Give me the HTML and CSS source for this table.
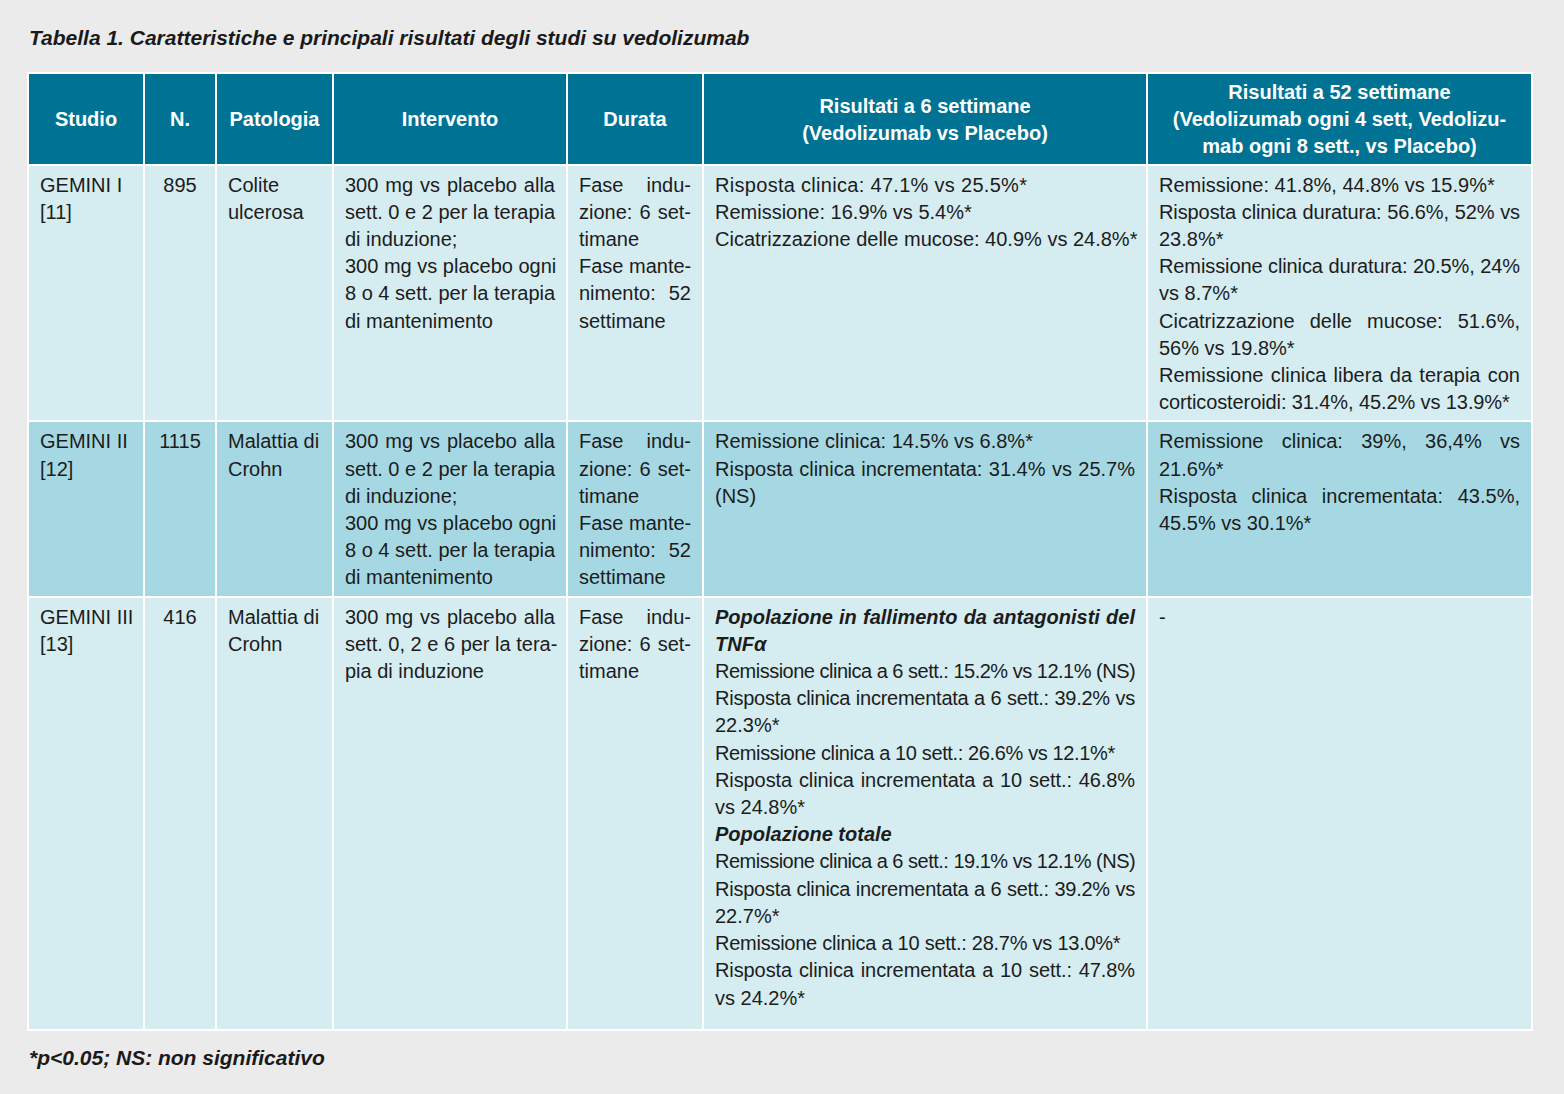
FILE: index.html
```html
<!DOCTYPE html>
<html lang="it">
<head>
<meta charset="utf-8">
<title>Tabella 1</title>
<link rel="stylesheet" href="styles.css">
</head>
<body>
<div class="page">
  <h1 class="caption">Tabella 1. Caratteristiche e principali risultati degli studi su vedolizumab</h1>
  <table class="data">
    <colgroup>
      <col class="c-studio"><col class="c-n"><col class="c-pat"><col class="c-int"><col class="c-dur"><col class="c-r6"><col class="c-r52">
    </colgroup>
    <thead>
      <tr>
        <th>Studio</th>
        <th>N.</th>
        <th>Patologia</th>
        <th>Intervento</th>
        <th>Durata</th>
        <th>Risultati a 6 settimane<br>(Vedolizumab vs Placebo)</th>
        <th>Risultati a 52 settimane<br>(Vedolizumab ogni 4 sett, Vedolizu-<br>mab ogni 8 sett., vs Placebo)</th>
      </tr>
    </thead>
    <tbody>
      <tr class="light">
        <td class="study">GEMINI I<br>[11]</td>
        <td class="num">895</td>
        <td>Colite<br>ulcerosa</td>
        <td>
          <p class="just"><span>300 mg vs placebo alla</span><span>sett. 0 e 2 per la terapia</span><span>di induzione;</span></p>
          <p class="just"><span>300 mg vs placebo ogni</span><span>8 o 4 sett. per la terapia</span><span>di mantenimento</span></p>
        </td>
        <td>
          <p class="just"><span>Fase indu-</span><span>zione: 6 set-</span><span>timane</span></p>
          <p class="just"><span>Fase mante-</span><span>nimento: 52</span><span>settimane</span></p>
        </td>
        <td>
          <p class="just"><span class="wide">Risposta clinica: 47.1% vs 25.5%*</span></p>
          <p class="just"><span>Remissione: 16.9% vs 5.4%*</span></p>
          <p class="just"><span>Cicatrizzazione delle mucose: 40.9% vs 24.8%*</span></p>
        </td>
        <td>
          <p class="just"><span>Remissione: 41.8%, 44.8% vs 15.9%*</span></p>
          <p class="just"><span class="tight-1">Risposta clinica duratura: 56.6%, 52% vs</span><span>23.8%*</span></p>
          <p class="just"><span class="tight-1">Remissione clinica duratura: 20.5%, 24%</span><span>vs 8.7%*</span></p>
          <p class="just"><span>Cicatrizzazione delle mucose: 51.6%,</span><span>56% vs 19.8%*</span></p>
          <p class="just"><span>Remissione clinica libera da terapia con</span><span class="tight-1">corticosteroidi: 31.4%, 45.2% vs 13.9%*</span></p>
        </td>
      </tr>
      <tr class="dark">
        <td class="study">GEMINI II<br>[12]</td>
        <td class="num">1115</td>
        <td>Malattia di<br>Crohn</td>
        <td>
          <p class="just"><span>300 mg vs placebo alla</span><span>sett. 0 e 2 per la terapia</span><span>di induzione;</span></p>
          <p class="just"><span>300 mg vs placebo ogni</span><span>8 o 4 sett. per la terapia</span><span>di mantenimento</span></p>
        </td>
        <td>
          <p class="just"><span>Fase indu-</span><span>zione: 6 set-</span><span>timane</span></p>
          <p class="just"><span>Fase mante-</span><span>nimento: 52</span><span>settimane</span></p>
        </td>
        <td>
          <p class="just"><span>Remissione clinica: 14.5% vs 6.8%*</span></p>
          <p class="just"><span>Risposta clinica incrementata: 31.4% vs 25.7%</span><span>(NS)</span></p>
        </td>
        <td>
          <p class="just"><span>Remissione clinica: 39%, 36,4% vs</span><span>21.6%*</span></p>
          <p class="just"><span>Risposta clinica incrementata: 43.5%,</span><span>45.5% vs 30.1%*</span></p>
        </td>
      </tr>
      <tr class="light last">
        <td class="study">GEMINI III<br>[13]</td>
        <td class="num">416</td>
        <td>Malattia di<br>Crohn</td>
        <td>
          <p class="just"><span>300 mg vs placebo alla</span><span>sett. 0, 2 e 6 per la tera-</span><span>pia di induzione</span></p>
        </td>
        <td>
          <p class="just"><span>Fase indu-</span><span>zione: 6 set-</span><span>timane</span></p>
        </td>
        <td>
          <p class="just sub"><span>Popolazione in fallimento da antagonisti del</span><span>TNFα</span></p>
          <p class="just"><span class="tight-5">Remissione clinica a 6 sett.: 15.2% vs 12.1% (NS)</span></p>
          <p class="just"><span class="tight-3">Risposta clinica incrementata a 6 sett.: 39.2% vs</span><span>22.3%*</span></p>
          <p class="just"><span class="tight-4">Remissione clinica a 10 sett.: 26.6% vs 12.1%*</span></p>
          <p class="just"><span class="tight-1">Risposta clinica incrementata a 10 sett.: 46.8%</span><span>vs 24.8%*</span></p>
          <p class="just sub"><span>Popolazione totale</span></p>
          <p class="just"><span class="tight-5">Remissione clinica a 6 sett.: 19.1% vs 12.1% (NS)</span></p>
          <p class="just"><span class="tight-3">Risposta clinica incrementata a 6 sett.: 39.2% vs</span><span>22.7%*</span></p>
          <p class="just"><span class="tight-3">Remissione clinica a 10 sett.: 28.7% vs 13.0%*</span></p>
          <p class="just"><span class="tight-1">Risposta clinica incrementata a 10 sett.: 47.8%</span><span>vs 24.2%*</span></p>
        </td>
        <td>-</td>
      </tr>
    </tbody>
  </table>
  <p class="note">*p&lt;0.05; NS: non significativo</p>
</div>
</body>
</html>
```

FILE: styles.css
```css
html, body {
  margin: 0;
  padding: 0;
  background: #ebebeb;
}

.page {
  padding: 26px 31px 20px 27px;
  font-family: "Liberation Sans", Arial, sans-serif;
  color: #1c1c1c;
}

.caption {
  margin: 0 0 23px 2px;
  font-size: 21px;
  line-height: 23px;
  font-weight: bold;
  font-style: italic;
  color: #1a1a1a;
}

.data {
  width: 1506px;
  table-layout: fixed;
  border-collapse: collapse;
  border: 2px solid #ffffff;
  font-size: 20px;
  line-height: 27.2px;
}

.c-studio { width: 116px; }
.c-n { width: 72px; }
.c-pat { width: 117px; }
.c-int { width: 234px; }
.c-dur { width: 136px; }
.c-r6 { width: 444px; }
.c-r52 { width: 385px; }

.data th,
.data td {
  border: 2px solid #ffffff;
}

.data th {
  background: #007394;
  color: #ffffff;
  font-weight: bold;
  text-align: center;
  vertical-align: middle;
  padding: 5px 8px 3px;
  height: 81px;
}

.data td {
  vertical-align: top;
  text-align: left;
  padding: 6px 11px 4px;
}

.data td.study {
  white-space: nowrap;
}

.data td.num {
  text-align: center;
}

.light td {
  background: #d5ecf1;
}

.dark td {
  background: #a6d8e3;
}

.last td {
  padding-bottom: 17px;
}

.just {
  margin: 0;
}

.just span {
  display: block;
  white-space: nowrap;
  text-align: justify;
  text-align-last: justify;
}

.just span:last-child {
  text-align-last: left;
}

.just .wide { letter-spacing: 0.3px; }
.just .tight-1 { letter-spacing: -0.1px; }
.just .tight-3 { letter-spacing: -0.25px; }
.just .tight-4 { letter-spacing: -0.37px; }
.just .tight-5 { letter-spacing: -0.5px; }

.just.sub {
  font-weight: bold;
  font-style: italic;
}

.note {
  margin: 15px 0 0 2px;
  font-size: 21px;
  line-height: 23px;
  font-weight: bold;
  font-style: italic;
  color: #1a1a1a;
}
```
